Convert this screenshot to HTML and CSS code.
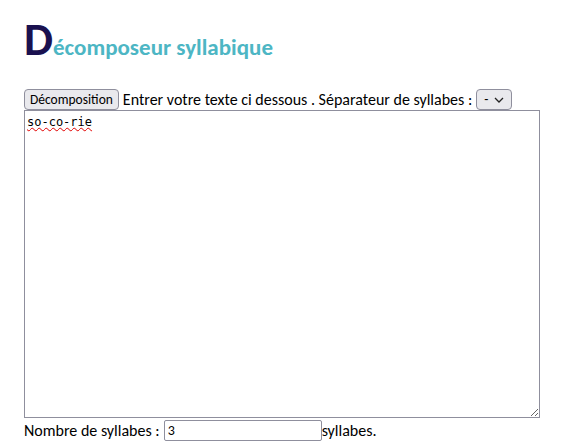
FILE: index.html
```html
<!DOCTYPE html>
<html lang="fr">
<head>
    <meta charset="UTF-8">
    <title>Décomposeur syllabique</title>
    <link rel="stylesheet" href="styles.css">
</head>
<body>
    <div class="page">
        <h1 class="title"><span class="big">D</span>écomposeur syllabique</h1>

        <div class="controls">
            <button class="btn" type="button">Décomposition</button>
            <span>Entrer votre texte ci dessous . Séparateur de syllabes :</span>
            <span class="sep-wrap">
                <select class="sep">
                    <option>-</option>
                    <option>/</option>
                    <option>·</option>
                </select>
                <svg class="chev" width="10" height="6" viewBox="0 0 10 6">
                    <path d="M1 1 L5 5 L9 1" fill="none" stroke="#222" stroke-width="1.3"/>
                </svg>
            </span>
        </div>

        <textarea class="text" spellcheck="true">so-co-rie</textarea>

        <div class="count">
            <label for="nb">Nombre de syllabes :</label>
            <input type="text" id="nb" class="nb" value="3"><span>syllabes.</span>
        </div>
    </div>
</body>
</html>
```

FILE: styles.css
```css
body {
    margin: 0;
    font-family: Carlito, Lato, "Open Sans", sans-serif;
    font-size: 16px;
    color: #000;
    background: #fff;
}
.page {
    padding: 0 24px;
}
.title {
    margin: 0;
    padding-top: 11px;
    height: 88px;
    box-sizing: border-box;
    font-size: 23px;
    font-weight: bold;
    color: #4db6c4;
}
.big {
    font-size: 46px;
    color: #1a1150;
}
.controls {
    display: flex;
    align-items: center;
    gap: 4px;
    height: 22px;
}
.btn,
.sep {
    font-family: inherit;
    font-size: 13.5px;
    height: 21px;
    padding: 0 5px;
    background: #e9e9ed;
    border: 1px solid #8f8f9d;
    border-radius: 4px;
    color: #000;
}
.sep-wrap {
    position: relative;
    display: inline-block;
    height: 21px;
}
.sep {
    appearance: none;
    width: 36px;
    padding: 0 0 0 7px;
}
.chev {
    position: absolute;
    right: 8px;
    top: 8px;
    pointer-events: none;
}
.text {
    display: block;
    box-sizing: border-box;
    width: 516px;
    height: 308px;
    margin: 0;
    padding: 4px 2px;
    border: 1px solid #8f8f9d;
    font-family: "DejaVu Sans Mono", monospace;
    font-size: 12px;
    text-decoration: underline wavy #e00000;
    text-decoration-thickness: 1px;
    resize: both;
}
.count {
    display: flex;
    align-items: center;
    height: 24px;
}
.nb {
    box-sizing: border-box;
    width: 158px;
    height: 21px;
    margin-left: 4px;
    padding: 0 3px;
    border: 1px solid #8f8f9d;
    border-radius: 2px;
    font-family: inherit;
    font-size: 14px;
}
```
